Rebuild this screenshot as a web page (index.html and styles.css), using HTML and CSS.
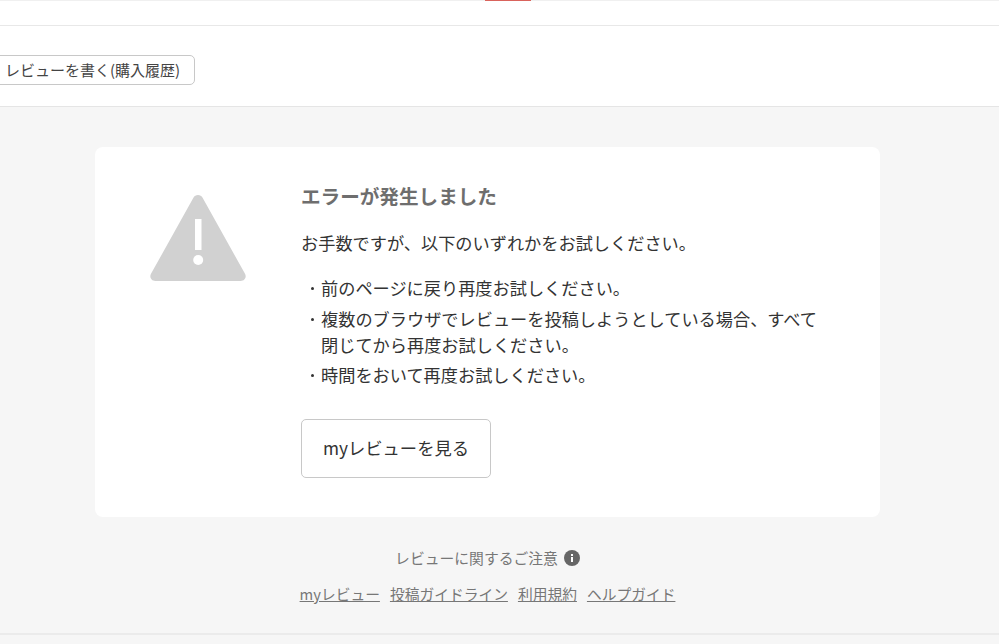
FILE: index.html
```html
<!DOCTYPE html>
<html lang="ja">
<head>
<meta charset="utf-8">
<title>エラーが発生しました</title>
<link rel="stylesheet" href="styles.css">
</head>
<body>
<div class="page">
  <header class="topbar"><span class="topbar-accent"></span></header>
  <div class="actionbar">
    <a class="write-btn" href="#">レビューを書く(購入履歴)</a>
  </div>
  <main class="main">
    <section class="card">
      <div class="card-icon">
        <svg class="warn" viewBox="0 0 96 86" width="96" height="86" aria-hidden="true">
          <path fill="#d1d1d1" d="M48 0c2 0 3.600 1 4.600 2.800l42.400 76c1.900 3.400-.4 7.200-4.300 7.200H5.300c-3.900 0-6.200-3.800-4.300-7.200l42.400-76C44.400 1 46 0 48 0z"/>
          <rect x="45" y="24" width="6.500" height="31" fill="#fff"/>
          <circle cx="48.200" cy="65" r="5" fill="#fff"/>
        </svg>
      </div>
      <div class="card-body">
        <h1 class="title">エラーが発生しました</h1>
        <p class="lead">お手数ですが、以下のいずれかをお試しください。</p>
        <ul class="list">
          <li>前のページに戻り再度お試しください。</li>
          <li>複数のブラウザでレビューを投稿しようとしている場合、すべて閉じてから再度お試しください。</li>
          <li>時間をおいて再度お試しください。</li>
        </ul>
        <a class="my-btn" href="#">myレビューを見る</a>
      </div>
    </section>
    <p class="notice">レビューに関するご注意
      <svg class="info" viewBox="0 0 16 16" width="16" height="16" aria-hidden="true">
        <circle cx="8" cy="8" r="8" fill="#666"/>
        <rect x="7" y="7" width="2" height="5" fill="#fff"/>
        <rect x="7" y="4" width="2" height="2" fill="#fff"/>
      </svg>
    </p>
    <nav class="links">
      <a href="#">myレビュー</a>
      <a href="#">投稿ガイドライン</a>
      <a href="#">利用規約</a>
      <a href="#">ヘルプガイド</a>
    </nav>
  </main>
  <div class="rule"></div>
</div>
</body>
</html>
```
FILE: styles.css
```css
* { box-sizing: border-box; }
html, body { margin: 0; padding: 0; height: 100%; overflow: hidden; }
body {
  background: #f6f6f6;
  color: #333;
  font-family: "Noto Sans CJK JP", "Noto Sans", sans-serif;
}
a { color: inherit; }
.page { display: flex; flex-direction: column; min-height: 644px; }
.topbar {
  height: 26px;
  background: #fff;
  border-top: 1px solid #f0f0f0;
  border-bottom: 1px solid #e8e8e8;
  display: flex;
  justify-content: flex-start;
  padding-left: 485px;
}
.topbar-accent {
  width: 46px;
  height: 1px;
  margin-top: -1px;
  background: #d9635c;
}
.actionbar {
  height: 81px;
  background: #fff;
  border-bottom: 1px solid #e5e5e5;
  display: flex;
  align-items: flex-start;
  padding-top: 29px;
}
.write-btn {
  display: flex;
  align-items: center;
  margin-left: -12px;
  height: 30px;
  padding: 0 14px 0 16px;
  font-size: 15px;
  line-height: 20px;
  color: #444;
  text-decoration: none;
  background: #fff;
  border: 1px solid #c8c8c8;
  border-radius: 5px;
}
.main {
  flex: none;
  height: 528px;
  padding-top: 40px;
  border-bottom: 2px solid #ebebeb;
  display: flex;
  flex-direction: column;
  align-items: center;
}
.card {
  width: 785px;
  height: 370px;
  margin-left: -24px;
  background: #fff;
  border-radius: 8px;
  display: flex;
  padding: 36px 58px 0 55px;
}
.card-icon { width: 151px; flex: none; padding-top: 12px; }
.warn { display: block; }
.card-body { flex: 1; min-width: 0; }
.title {
  margin: 0;
  font-size: 19.600px;
  line-height: 26px;
  font-weight: 700;
  color: #6e6e6e;
}
.lead {
  margin: 21px 0 0;
  font-size: 17.200px;
  line-height: 26px;
}
.list {
  margin: 19px 0 0;
  padding: 0;
  list-style: none;
  font-size: 17.200px;
  line-height: 26px;
}
.list li { position: relative; padding-left: 20px; margin-bottom: 4.500px; }
.list li::before {
  content: "";
  position: absolute;
  left: 10px;
  top: 12px;
  width: 3px;
  height: 3px;
  border-radius: 50%;
  background: #333;
}
.my-btn {
  display: flex;
  align-items: center;
  justify-content: center;
  width: 190px;
  height: 59px;
  margin-top: 31px;
  padding-bottom: 2px;
  font-size: 17.300px;
  color: #333;
  text-decoration: none;
  background: #fff;
  border: 1px solid #c8c8c8;
  border-radius: 5px;
}
.notice {
  margin: 30px 0 0 -24px;
  display: flex;
  align-items: center;
  gap: 6px;
  height: 22px;
  font-size: 14.800px;
  line-height: 22px;
  color: #777;
}
.info { display: block; }
.links {
  margin: 15px 0 0 -24px;
  display: flex;
  gap: 10px;
  font-size: 14.750px;
  line-height: 20px;
  color: #777;
}
.rule { flex: 1; background: #f6f6f6; }
```
